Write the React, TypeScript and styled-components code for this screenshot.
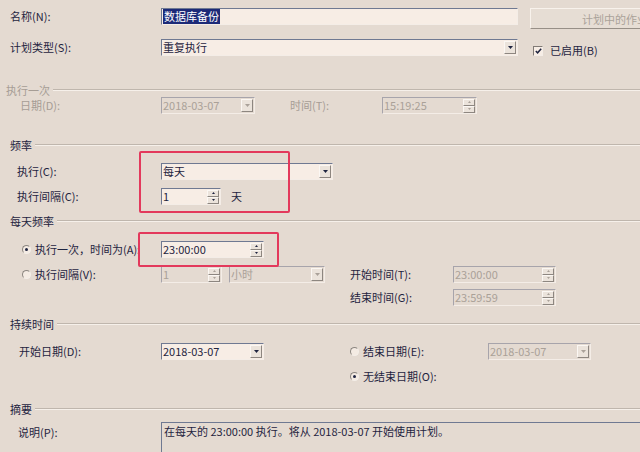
import React from "react";
import styled, { createGlobalStyle } from "styled-components";

const GlobalStyle = createGlobalStyle`
  html, body {
    margin: 0;
    padding: 0;
    background: #e4dad1;
  }
  body {
    font-family: "Noto Sans CJK SC", "Liberation Sans", sans-serif;
    font-size: 11px;
    color: #1f2440;
  }
`;

const Page = styled.div`
  position: relative;
  width: 640px;
  height: 452px;
  overflow: hidden;
  box-sizing: border-box;
  padding-left: 10px;
  background: #e4dad1;
`;

const Row = styled.div<{ $mt: number; $h?: number }>`
  display: flex;
  align-items: flex-start;
  height: ${(p) => p.$h ?? 17}px;
  margin-top: ${(p) => p.$mt}px;
`;

const LeftCell = styled.div`
  display: flex;
  align-items: flex-start;
  width: 340px;
  flex-shrink: 0;
`;

const Label = styled.span<{ $w?: number; $indent?: number; $ml?: number; $disabled?: boolean }>`
  flex-shrink: 0;
  box-sizing: border-box;
  width: ${(p) => p.$w ?? 151}px;
  padding-left: ${(p) => p.$indent ?? 0}px;
  margin-left: ${(p) => p.$ml ?? 0}px;
  line-height: 17px;
  white-space: nowrap;
  color: ${(p) => (p.$disabled ? "#a69d95" : "#1f2440")};
`;

const Section = styled.div<{ $mt: number; $shift?: number; $disabled?: boolean }>`
  display: flex;
  align-items: center;
  height: 14px;
  margin-top: ${(p) => p.$mt}px;
  margin-left: ${(p) => p.$shift ?? 0}px;
  white-space: nowrap;
  color: ${(p) => (p.$disabled ? "#a69d95" : "#1f2440")};

  &::after {
    content: "";
    flex: 1;
    margin-left: 3px;
    border-top: 1px solid #bfb6ad;
    border-bottom: 1px solid #f6f0ea;
  }
`;

const Field = styled.div<{ $w: number; $ml?: number; $disabled?: boolean }>`
  display: flex;
  align-items: center;
  flex-shrink: 0;
  box-sizing: border-box;
  width: ${(p) => p.$w}px;
  height: 17px;
  margin-left: ${(p) => p.$ml ?? 0}px;
  background: ${(p) => (p.$disabled ? "#e4dad1" : "#f7ede5")};
  border-top: 1px solid ${(p) => (p.$disabled ? "#a7a4ab" : "#6f7992")};
  border-left: 1px solid ${(p) => (p.$disabled ? "#a7a4ab" : "#6f7992")};
  border-right: 1px solid #f4ede7;
  border-bottom: 1px solid #f4ede7;
  color: ${(p) => (p.$disabled ? "#aaa198" : "#1f2440")};
`;

const FieldText = styled.span`
  flex: 1;
  padding-left: 1px;
  line-height: 15px;
  white-space: nowrap;
  overflow: hidden;
`;

const Selected = styled.span`
  background: #1c2a78;
  color: #ffffff;
  padding: 0 1px;
`;

const DropButton = styled.span`
  display: flex;
  align-items: center;
  justify-content: center;
  box-sizing: border-box;
  width: 12px;
  height: 13px;
  margin-right: 1px;
  background: #ebe3db;
  border: 1px solid;
  border-color: #fbf7f3 #8d8680 #8d8680 #fbf7f3;
`;

const SpinStack = styled.span`
  display: flex;
  flex-direction: column;
  width: 12px;
  height: 14px;
  margin-right: 1px;
`;

const SpinHalf = styled.span`
  flex: 1;
  display: flex;
  align-items: center;
  justify-content: center;
  box-sizing: border-box;
  background: #ebe3db;
  border: 1px solid;
  border-color: #fbf7f3 #8d8680 #8d8680 #fbf7f3;
`;

const Unit = styled.span`
  margin-left: 10px;
  line-height: 17px;
`;

const PushButton = styled.div`
  display: flex;
  align-items: center;
  justify-content: center;
  flex-shrink: 0;
  box-sizing: border-box;
  width: 170px;
  height: 21px;
  margin-left: 12px;
  background: #e6ddd4;
  border: 1px solid;
  border-color: #f8f2ec #978f87 #978f87 #f8f2ec;
  color: #aaa299;
  white-space: nowrap;
`;

const CheckWrap = styled.label`
  display: flex;
  align-items: center;
  gap: 7px;
  margin-left: 15px;
  margin-top: 3px;
  line-height: 17px;
  white-space: nowrap;
`;

const CheckBox = styled.span`
  display: flex;
  align-items: center;
  justify-content: center;
  box-sizing: border-box;
  width: 10px;
  height: 10px;
  background: #f7ede5;
  border: 1px solid;
  border-color: #817b76 #f4ede7 #f4ede7 #817b76;
`;

const RadioLabel = styled.span<{ $w: number; $indent?: number; $ml?: number }>`
  display: flex;
  align-items: center;
  gap: 4px;
  flex-shrink: 0;
  box-sizing: border-box;
  width: ${(p) => p.$w}px;
  padding-left: ${(p) => p.$indent ?? 0}px;
  margin-left: ${(p) => p.$ml ?? 0}px;
  line-height: 17px;
  white-space: nowrap;
`;

const Radio = styled.span<{ $checked?: boolean }>`
  display: flex;
  align-items: center;
  justify-content: center;
  box-sizing: border-box;
  width: 9px;
  height: 9px;
  border-radius: 50%;
  background: #f4ebe3;
  border: 1px solid;
  border-color: #8c8680 #f4eee8 #f4eee8 #8c8680;

  &::after {
    content: "";
    width: 3px;
    height: 3px;
    border-radius: 50%;
    background: ${(p) => (p.$checked ? "#1f2440" : "transparent")};
  }
`;

const Summary = styled.div`
  box-sizing: border-box;
  width: 500px;
  height: 60px;
  padding: 1px 2px;
  border-top: 1px solid #6f7992;
  border-left: 1px solid #6f7992;
  line-height: 15px;
  white-space: nowrap;
`;

const Annotation = styled.div<{ $x: number; $y: number; $w: number; $h: number }>`
  position: absolute;
  left: ${(p) => p.$x}px;
  top: ${(p) => p.$y}px;
  width: ${(p) => p.$w}px;
  height: ${(p) => p.$h}px;
  box-sizing: border-box;
  border: 2px solid #e3395c;
  border-radius: 2px;
  pointer-events: none;
`;

const Arrow = ({ color }: { color: string }) => (
  <svg width="5" height="3" viewBox="0 0 5 3">
    <path d="M0 0h5L2.5 3z" fill={color} />
  </svg>
);

const SmallArrow = ({ up, color }: { up?: boolean; color: string }) => (
  <svg width="3" height="2" viewBox="0 0 3 2">
    <path d={up ? "M0 2h3L1.5 0z" : "M0 0h3L1.5 2z"} fill={color} />
  </svg>
);

const Combo = ({
  w,
  ml,
  value,
  disabled,
}: {
  w: number;
  ml?: number;
  value: React.ReactNode;
  disabled?: boolean;
}) => (
  <Field $w={w} $ml={ml} $disabled={disabled}>
    <FieldText>{value}</FieldText>
    <DropButton>
      <Arrow color={disabled ? "#aaa199" : "#1f2440"} />
    </DropButton>
  </Field>
);

const Spin = ({ w, value, disabled }: { w: number; value: string; disabled?: boolean }) => {
  const c = disabled ? "#aaa199" : "#1f2440";
  return (
    <Field $w={w} $disabled={disabled}>
      <FieldText>{value}</FieldText>
      <SpinStack>
        <SpinHalf>
          <SmallArrow up color={c} />
        </SpinHalf>
        <SpinHalf>
          <SmallArrow color={c} />
        </SpinHalf>
      </SpinStack>
    </Field>
  );
};

export default function App() {
  return (
    <Page>
      <GlobalStyle />

      <Row $mt={8} $h={21}>
        <Label>名称(N):</Label>
        <Field $w={357}>
          <FieldText>
            <Selected>数据库备份</Selected>
          </FieldText>
        </Field>
        <PushButton>计划中的作业</PushButton>
      </Row>

      <Row $mt={10}>
        <Label>计划类型(S):</Label>
        <Combo w={357} value="重复执行" />
        <CheckWrap>
          <CheckBox>
            <svg width="7" height="6" viewBox="0 0 7 6">
              <path d="M0.8 3 L2.6 4.8 L6.2 0.8" stroke="#1f2440" strokeWidth="1.5" fill="none" />
            </svg>
          </CheckBox>
          已启用(B)
        </CheckWrap>
      </Row>

      <Section $mt={27} $shift={-4} $disabled>执行一次</Section>
      <Row $mt={0}>
        <Label $indent={10} $disabled>日期(D):</Label>
        <Combo w={94} value="2018-03-07" disabled />
        <Label $w={92} $ml={35} $disabled>时间(T):</Label>
        <Spin w={95} value="15:19:25" disabled />
      </Row>

      <Section $mt={24}>频率</Section>
      <Row $mt={11}>
        <Label $indent={7}>执行(C):</Label>
        <Combo w={172} value="每天" />
      </Row>
      <Row $mt={8}>
        <Label $indent={7}>执行间隔(C):</Label>
        <Spin w={60} value="1" />
        <Unit>天</Unit>
      </Row>

      <Section $mt={9}>每天频率</Section>
      <Row $mt={13}>
        <RadioLabel $w={151} $indent={12}>
          <Radio $checked />
          执行一次，时间为(A):
        </RadioLabel>
        <Spin w={103} value="23:00:00" />
      </Row>
      <Row $mt={8}>
        <LeftCell>
          <RadioLabel $w={151} $indent={12}>
            <Radio />
            执行间隔(V):
          </RadioLabel>
          <Spin w={61} value="1" disabled />
          <Combo w={96} ml={7} value="小时" disabled />
        </LeftCell>
        <Label $w={103}>开始时间(T):</Label>
        <Spin w={103} value="23:00:00" disabled />
      </Row>
      <Row $mt={6}>
        <LeftCell />
        <Label $w={103}>结束时间(G):</Label>
        <Spin w={103} value="23:59:59" disabled />
      </Row>

      <Section $mt={11}>持续时间</Section>
      <Row $mt={12}>
        <LeftCell>
          <Label $indent={9}>开始日期(D):</Label>
          <Combo w={103} value="2018-03-07" />
        </LeftCell>
        <RadioLabel $w={138}>
          <Radio />
          结束日期(E):
        </RadioLabel>
        <Combo w={103} value="2018-03-07" disabled />
      </Row>
      <Row $mt={8}>
        <LeftCell />
        <RadioLabel $w={160}>
          <Radio $checked />
          无结束日期(O):
        </RadioLabel>
      </Row>

      <Section $mt={17}>摘要</Section>
      <Row $mt={6} $h={60}>
        <Label $indent={8} style={{ marginTop: 2 }}>说明(P):</Label>
        <Summary>在每天的 23:00:00 执行。将从 2018-03-07 开始使用计划。</Summary>
      </Row>

      <Annotation $x={139} $y={151} $w={151} $h={62} />
      <Annotation $x={138} $y={232} $w={141} $h={35} />
    </Page>
  );
}
